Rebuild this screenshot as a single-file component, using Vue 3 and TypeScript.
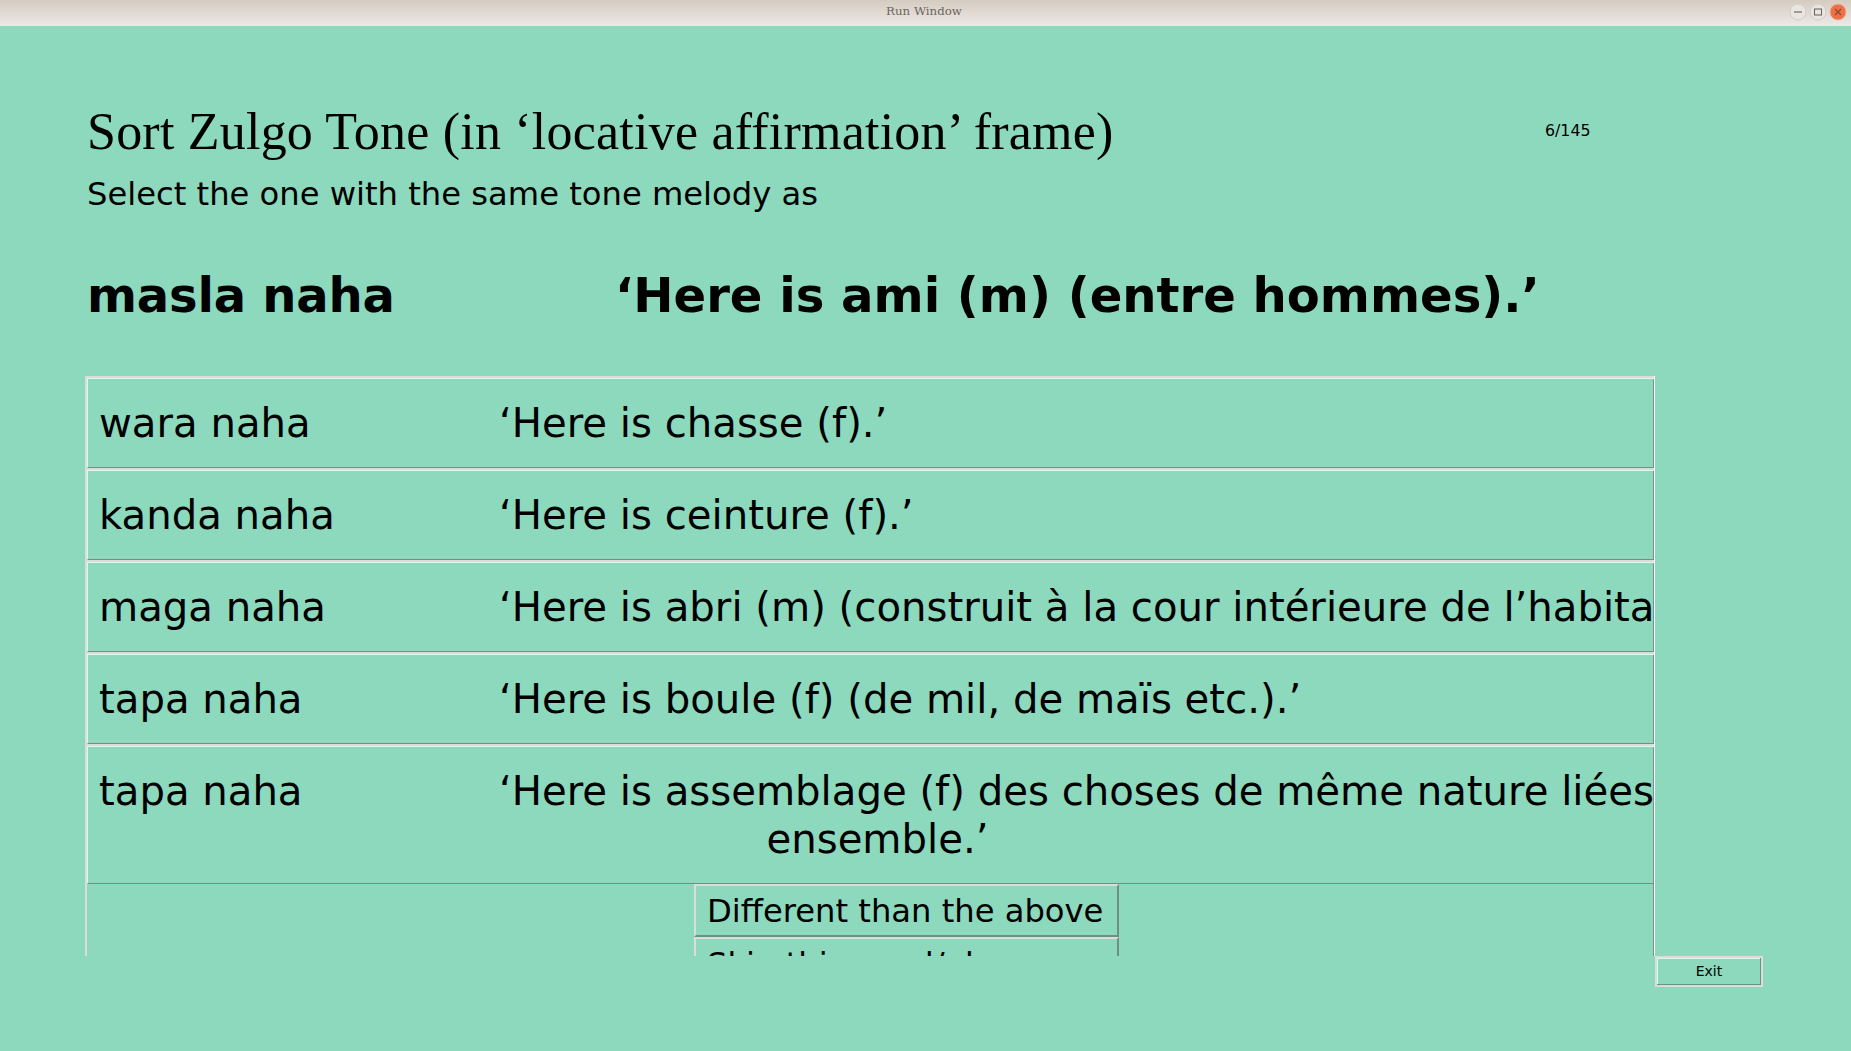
<script setup lang="ts">
interface Row {
  word: string
  gloss: string
  more?: string
}

const rows: Row[] = [
  { word: 'wara naha', gloss: '‘Here is chasse (f).’' },
  { word: 'kanda naha', gloss: '‘Here is ceinture (f).’' },
  { word: 'maga naha', gloss: '‘Here is abri (m) (construit à la cour intérieure de l’habitation).’' },
  { word: 'tapa naha', gloss: '‘Here is boule (f) (de mil, de maïs etc.).’' },
  { word: 'tapa naha', gloss: '‘Here is assemblage (f) des choses de même nature liées', more: 'ensemble.’' }
]
</script>

<template>
  <div class="window">
    <header class="titlebar">
      <span class="titlebar-text">Run Window</span>
      <div class="win-buttons">
        <svg class="win-btn" width="18" height="18" viewBox="0 0 18 18">
          <circle cx="9" cy="9" r="8" fill="#e9e5e1" stroke="#d3cdc7" />
          <path d="M5 9h8" stroke="#6f6a65" stroke-width="1.2" />
        </svg>
        <svg class="win-btn" width="18" height="18" viewBox="0 0 18 18">
          <circle cx="9" cy="9" r="8" fill="#e9e5e1" stroke="#d3cdc7" />
          <rect x="5.5" y="6" width="7" height="6" fill="none" stroke="#6f6a65" stroke-width="1.1" />
        </svg>
        <svg class="win-btn" width="18" height="18" viewBox="0 0 18 18">
          <circle cx="9" cy="9" r="8" fill="#ee7045" stroke="#e8b09a" />
          <path d="M6 6l6 6M12 6l-6 6" stroke="#8a4a35" stroke-width="1.2" />
        </svg>
      </div>
    </header>

    <main class="content">
      <div class="heading-row">
        <h1 class="title">Sort Zulgo Tone (in ‘locative affirmation’ frame)</h1>
        <span class="counter">6/145</span>
      </div>
      <p class="instructions">Select the one with the same tone melody as</p>

      <div class="target">
        <span class="target-word">masla naha</span>
        <span class="target-gloss">‘Here is ami (m) (entre hommes).’</span>
      </div>

      <div class="frame">
        <div v-for="(row, i) in rows" :key="i" class="row">
          <div class="row-inner" :class="{ tall: row.more }">
            <span class="word">{{ row.word }}</span>
            <div class="gloss">
              <span class="gloss-line">{{ row.gloss }}</span>
              <span v-if="row.more" class="gloss-more">{{ row.more }}</span>
            </div>
          </div>
        </div>
        <div class="actions">
          <button class="action">Different than the above</button>
          <button class="action">Skip this word/phrase</button>
        </div>
      </div>

      <div class="footer">
        <button class="exit">Exit</button>
      </div>
    </main>
  </div>
</template>

<style>
html,
body {
  margin: 0;
  background: #8cd9bd;
}
</style>

<style scoped>
.window {
  width: 1851px;
  height: 1051px;
  display: flex;
  flex-direction: column;
  overflow: hidden;
  background: #8cd9bd;
  color: #000;
  font-family: "DejaVu Sans", sans-serif;
}

.titlebar {
  flex: none;
  height: 26px;
  display: flex;
  align-items: center;
  justify-content: center;
  position: relative;
  background: linear-gradient(#d5cbc1, #eee9e5);
}

.titlebar-text {
  margin-top: -4px;
  margin-right: 3px;
  font-family: "DejaVu Serif", serif;
  font-size: 11.8px;
  color: #6b6560;
}

.win-buttons {
  position: absolute;
  right: 4px;
  top: 3px;
  display: flex;
  gap: 2px;
}

.win-btn {
  display: block;
}

.content {
  flex: 1;
  padding: 0 0 0 85px;
  display: flex;
  flex-direction: column;
}

.heading-row {
  display: flex;
  margin-top: 75px;
  height: 62px;
  align-items: center;
}

.title {
  margin: 0 0 0 2px;
  width: 1458px;
  flex: none;
  font-family: "Liberation Serif", serif;
  font-weight: 400;
  font-size: 52px;
  letter-spacing: 0.22px;
  line-height: 62px;
  white-space: nowrap;
}

.counter {
  font-size: 15.8px;
  margin-top: -4px;
}

.instructions {
  margin: 9px 0 0 2px;
  height: 44px;
  font-size: 32.2px;
  line-height: 44px;
}

.target {
  display: flex;
  margin: 43px 0 0 2px;
  height: 72px;
  align-items: center;
  font-weight: 700;
  font-size: 48px;
  white-space: nowrap;
}

.target-word {
  width: 528px;
  letter-spacing: -0.2px;
}

.target-gloss {
  font-size: 48.1px;
}

.frame {
  margin-top: 45px;
  width: 1570px;
  height: 580px;
  box-sizing: border-box;
  overflow: hidden;
  border-left: 2px solid #dcdcdc;
  border-right: 1px solid #fff;
  box-shadow: inset -1px 0 0 #7c8f88;
}

.row {
  border-top: 2px solid #dcdcdc;
}

.row-inner {
  display: flex;
  box-sizing: border-box;
  height: 90px;
  padding: 21px 0 0 11px;
  border-top: 1px solid #d9fbef;
  border-left: 1px solid #d9fbef;
  border-bottom: 1px solid #6e8f83;
  font-size: 40.2px;
  line-height: 47px;
}

.row-inner.tall {
  height: 138px;
}

.word {
  flex: none;
  width: 400px;
  white-space: nowrap;
}

.gloss {
  min-width: 0;
}

.gloss-line {
  display: block;
  white-space: nowrap;
}

.gloss-more {
  display: block;
  width: 757px;
  margin-top: 1px;
  text-align: center;
}

.actions {
  display: flex;
  flex-direction: column;
  align-items: flex-start;
  margin-left: 607px;
}

.action {
  width: 425px;
  height: 53px;
  padding: 0 0 0 11px;
  box-sizing: border-box;
  background: #8cd9bd;
  color: #000;
  border: 2px solid #dcdcdc;
  border-right-color: #6e8f83;
  border-bottom-color: #6e8f83;
  font-family: inherit;
  font-size: 32.2px;
  text-align: left;
  white-space: nowrap;
}

.footer {
  display: flex;
  padding-left: 1570px;
}

.exit {
  width: 108px;
  height: 31px;
  padding: 0 0 2px;
  box-sizing: border-box;
  background: #8cd9bd;
  color: #000;
  border: 2px solid #dcdcdc;
  box-shadow: inset -1px -1px 0 #6e8f83, inset 1px 1px 0 #d9fbef;
  font-family: inherit;
  font-size: 14px;
}
</style>
